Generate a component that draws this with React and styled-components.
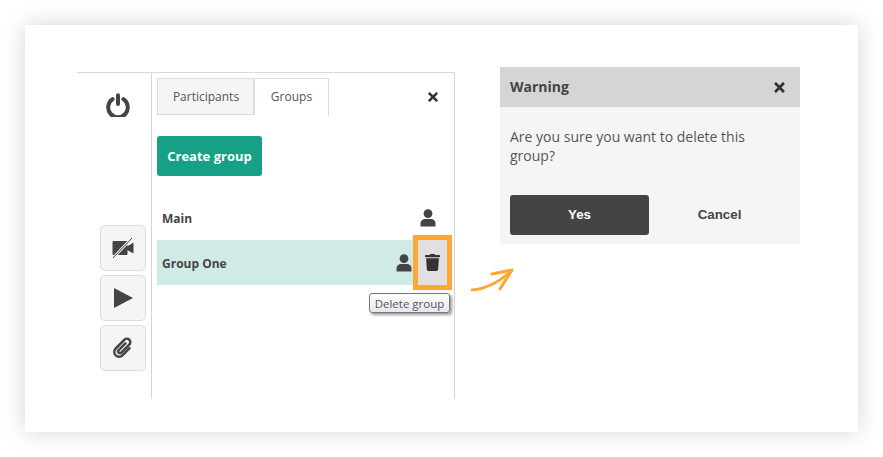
import styled, { createGlobalStyle } from "styled-components";
import { FaTrash, FaTimes } from "react-icons/fa";

const GlobalStyle = createGlobalStyle`
  html, body {
    margin: 0;
    padding: 0;
    background: #fff;
  }
  body {
    font-family: "Open Sans", "Liberation Sans", sans-serif;
    color: #444;
  }
`;

const Page = styled.div`
  width: 883px;
  height: 457px;
  padding: 25px;
  box-sizing: border-box;
  overflow: hidden;
`;

const Card = styled.div`
  width: 833px;
  height: 407px;
  padding: 42px 0 0 52px;
  box-sizing: border-box;
  background: #fff;
  box-shadow: 0 0 22px rgba(0, 0, 0, 0.17);
  display: flex;
  align-items: flex-start;
  gap: 45px;
`;

const Panel = styled.div`
  width: 378px;
  height: 327px;
  margin-top: 5px;
  box-sizing: border-box;
  border-top: 1px solid #d9d9d9;
  display: flex;
`;

const Rail = styled.div`
  width: 74px;
  padding: 20px 5px 0 0;
  box-sizing: border-box;
  display: flex;
  flex-direction: column;
  align-items: flex-end;
`;

const PowerIcon = styled.svg`
  width: 24px;
  height: 24px;
  margin-right: 16px;
  margin-bottom: 108px;
`;

const RailButton = styled.div`
  width: 46px;
  height: 46px;
  box-sizing: border-box;
  margin-bottom: 4px;
  border: 1px solid #ddd;
  border-radius: 5px;
  background: #f5f5f5;
  display: flex;
  align-items: center;
  justify-content: center;
`;

const RailIcon = styled.svg`
  width: ${(p) => p.$w}px;
  height: ${(p) => p.$h}px;
  fill: #444;
`;

const Main = styled.div`
  flex: 1;
  padding: 5px 7px 0 5px;
  border-left: 1px solid #d4d4d4;
  border-right: 1px solid #d4d4d4;
`;

const TabBar = styled.div`
  height: 38px;
  display: flex;
  align-items: flex-start;
`;

const Tab = styled.div`
  height: ${(p) => (p.$active ? 38 : 37)}px;
  width: ${(p) => (p.$active ? 74 : 98)}px;
  box-sizing: border-box;
  padding: 0 0 ${(p) => (p.$active ? 2 : 0)}px ${(p) => (p.$active ? 0 : 1)}px;
  border: 1px solid #ddd;
  border-left-width: ${(p) => (p.$active ? 0 : 1)}px;
  border-right-width: ${(p) => (p.$active ? 1 : 2)}px;
  border-bottom-width: ${(p) => (p.$active ? 0 : 1)}px;
  background: ${(p) => (p.$active ? "#fff" : "#f5f5f5")};
  color: #555;
  font-size: 12px;
  display: flex;
  align-items: center;
  justify-content: center;
`;

const CloseButton = styled.div`
  margin: 12px 7px 0 auto;
  color: #333;
  font-size: 14px;
  line-height: 0;
`;

const CreateButton = styled.div`
  width: 105px;
  height: 40px;
  margin: 20px 0;
  border-radius: 3px;
  background: #16a085;
  color: #fff;
  font-size: 13px;
  font-weight: 700;
  display: flex;
  align-items: center;
  justify-content: center;
`;

const GroupRow = styled.div`
  height: ${(p) => (p.$first ? 44 : 45)}px;
  display: flex;
`;

const GroupInfo = styled.div`
  flex: 1;
  padding: 0 ${(p) => (p.$selected ? 6 : 11)}px 0 5px;
  background: ${(p) => (p.$selected ? "#d0ebe5" : "transparent")};
  color: #444;
  font-size: 12px;
  font-weight: 700;
  display: flex;
  align-items: center;
  justify-content: space-between;
`;

const GroupName = styled.span`
  margin-top: ${(p) => (p.$selected ? 2 : 0)}px;
`;

const PersonIcon = styled.svg`
  width: 16px;
  height: 18px;
  fill: #444;
`;

const DeleteCell = styled.div`
  width: 29px;
  position: relative;
  background: #e0e0e0;
  outline: 5px solid #ffa733;
  color: #333;
  font-size: 17px;
  display: flex;
  align-items: center;
  justify-content: center;
`;

const Tooltip = styled.div`
  position: absolute;
  top: 53px;
  right: -3px;
  width: 81px;
  height: 20px;
  box-sizing: border-box;
  border: 1px solid #777;
  border-radius: 3px;
  background: linear-gradient(#fff, #e6e6f0);
  box-shadow: 2px 2px 3px rgba(0, 0, 0, 0.4);
  color: #555;
  font-size: 11.5px;
  white-space: nowrap;
  display: flex;
  align-items: center;
  justify-content: center;
`;

const DialogColumn = styled.div`
  position: relative;
  width: 300px;
`;

const Arrow = styled.svg`
  position: absolute;
  left: -30px;
  top: 201px;
  width: 45px;
  height: 26px;
`;

const Dialog = styled.div`
  background: #f5f5f5;
`;

const DialogHeader = styled.div`
  height: 40px;
  padding: 0 13px 2px 10px;
  box-sizing: border-box;
  background: #d5d5d5;
  color: #444;
  font-size: 14px;
  font-weight: 700;
  display: flex;
  align-items: center;
  justify-content: space-between;
`;

const DialogClose = styled.span`
  color: #333;
  font-size: 15px;
  line-height: 0;
  margin-top: 2px;
`;

const DialogText = styled.p`
  margin: 0;
  height: 88px;
  padding: 20px 10px 0;
  box-sizing: border-box;
  color: #555;
  font-size: 14px;
  line-height: 19px;
`;

const DialogActions = styled.div`
  padding: 0 10px 9px;
  display: flex;
`;

const ActionButton = styled.div`
  flex: ${(p) => (p.$primary ? "0 0 139px" : "1")};
  height: 40px;
  padding-bottom: 1px;
  box-sizing: border-box;
  border-radius: 3px;
  background: ${(p) => (p.$primary ? "#444" : "transparent")};
  color: ${(p) => (p.$primary ? "#fff" : "#444")};
  font-family: "Liberation Sans", Arial, sans-serif;
  font-size: 13.33px;
  font-weight: 700;
  display: flex;
  align-items: center;
  justify-content: center;
`;

const Person = () => (
  <PersonIcon viewBox="0 0 16 18">
    <circle cx="8" cy="4.6" r="4.4" />
    <path d="M0.5 17.5V14.5C0.5 11.6 2.8 10 5 10H11C13.2 10 15.5 11.6 15.5 14.5V17.5Z" />
  </PersonIcon>
);

const App = () => (
  <Page>
    <GlobalStyle />
    <Card>
      <Panel>
        <Rail>
          <PowerIcon viewBox="0 0 24 24" fill="none" stroke="#444" strokeWidth="4" strokeLinecap="round">
            <path d="M6.6 6.2A9.8 9.8 0 1 0 17.4 6.2" />
            <path d="M12 2.2V11" />
          </PowerIcon>
          <RailButton>
            <RailIcon $w={22} $h={22} viewBox="0 0 22 22">
              <rect x="0.5" y="4" width="15" height="14" rx="1" />
              <path d="M15 9.5L21.5 5.5V16.5L15 13Z" />
              <path d="M1 21L20 1" stroke="#f5f5f5" strokeWidth="2.6" />
              <path d="M1 21L20 1" stroke="#444" strokeWidth="1" />
            </RailIcon>
          </RailButton>
          <RailButton>
            <RailIcon $w={19} $h={20} viewBox="0 0 19 20">
              <path d="M0 0L19 10L0 20Z" />
            </RailIcon>
          </RailButton>
          <RailButton>
            <RailIcon $w={22} $h={22} viewBox="0 0 22 22">
              <g transform="rotate(45 11 11) translate(0 -0.5)" fill="none" stroke="#444" strokeWidth="2.5" strokeLinecap="round">
                <path d="M9.4 6.5V16A1.8 1.8 0 0 0 13 16V4.6A3.4 3.4 0 0 0 6.2 4.6V17A4.8 4.8 0 0 0 15.8 17V7" />
              </g>
            </RailIcon>
          </RailButton>
        </Rail>
        <Main>
          <TabBar>
            <Tab>Participants</Tab>
            <Tab $active>Groups</Tab>
            <CloseButton>
              <FaTimes />
            </CloseButton>
          </TabBar>
          <CreateButton>Create group</CreateButton>
          <GroupRow $first>
            <GroupInfo>
              <GroupName>Main</GroupName>
              <Person />
            </GroupInfo>
          </GroupRow>
          <GroupRow>
            <GroupInfo $selected>
              <GroupName $selected>Group One</GroupName>
              <Person />
            </GroupInfo>
            <DeleteCell>
              <FaTrash />
              <Tooltip>Delete group</Tooltip>
            </DeleteCell>
          </GroupRow>
        </Main>
      </Panel>
      <DialogColumn>
        <Arrow viewBox="0 0 45 26" fill="none" stroke="#ffa733" strokeLinecap="round" strokeLinejoin="round">
          <path d="M2 22C15 21 27 16 41 3" strokeWidth="3" />
          <path d="M22 6L42 2L30 21" strokeWidth="3" />
        </Arrow>
        <Dialog>
          <DialogHeader>
            Warning
            <DialogClose>
              <FaTimes />
            </DialogClose>
          </DialogHeader>
          <DialogText>Are you sure you want to delete this group?</DialogText>
          <DialogActions>
            <ActionButton $primary>Yes</ActionButton>
            <ActionButton>Cancel</ActionButton>
          </DialogActions>
        </Dialog>
      </DialogColumn>
    </Card>
  </Page>
);

export default App;
